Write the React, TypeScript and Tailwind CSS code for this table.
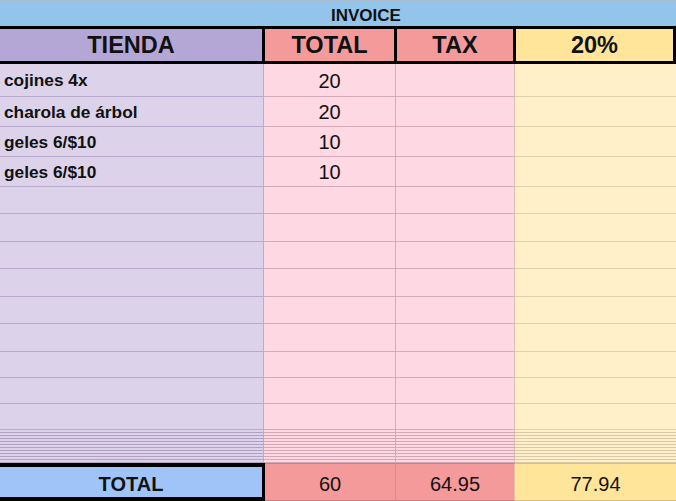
import React from "react";

const items = [
    { name: "cojines 4x", total: "20" },
    { name: "charola de árbol", total: "20" },
    { name: "geles 6/$10", total: "10" },
    { name: "geles 6/$10", total: "10" },
];

// row heights incl. the 1px bottom line
const rowHeights = [
    "h-[33px]", "h-[30px]", "h-[30px]", "h-[30px]",
    "h-[27px]", "h-[28px]", "h-[27px]", "h-[28px]", "h-[27px]",
    "h-[28px]", "h-[26px]", "h-[26px]", "h-[26px]",
];

function DataRow({ h, name, total }: { h: string; name?: string; total?: string }) {
    return (
        <div className={`flex w-full ${h}`}>
            <div className="w-[264px] flex items-center pl-[4px] pt-[2px] bg-[#dcd3ea] border-b border-r border-b-[#b8aacb] border-r-[#c2aac4] text-[17.3px] font-bold text-[#111]">
                {name}
            </div>
            <div className="w-[132px] flex items-center justify-center pt-[1px] bg-[#fed9e3] border-b border-r border-b-[#d7aabb] border-r-[#d7aabb] text-[20px] text-[#111]">
                {total}
            </div>
            <div className="w-[119px] bg-[#fed9e3] border-b border-r border-b-[#d7aabb] border-r-[#dcc0b0]"></div>
            <div className="flex-1 bg-[#fff0ca] border-b border-b-[#e2cfae]"></div>
        </div>
    );
}

function ThinRow() {
    return (
        <div className="flex w-full h-[3px]">
            <div className="w-[264px] bg-[#dcd3ea] border-b border-r border-b-[#b0a2c4] border-r-[#c2aac4]"></div>
            <div className="w-[132px] bg-[#fed9e3] border-b border-r border-b-[#d3a6b6] border-r-[#d7aabb]"></div>
            <div className="w-[119px] bg-[#fed9e3] border-b border-r border-b-[#d3a6b6] border-r-[#dcc0b0]"></div>
            <div className="flex-1 bg-[#fff0ca] border-b border-b-[#dcc8a6]"></div>
        </div>
    );
}

export default function App() {
    return (
        <section className="w-[676px] h-[501px] overflow-hidden bg-white font-['Liberation_Sans',Arial,sans-serif] text-[#111]">
            <div className="h-[26px] flex items-center pl-[331px] pt-[5px] bg-[#93c5ea] border-t border-t-[#a9bccb] text-[17px] font-bold">
                INVOICE
            </div>
            <div className="flex h-[38px] border-y-[3px] border-black text-[23.5px] font-bold">
                <div className="w-[265px] flex items-center justify-center pt-[2px] bg-[#b4a7d6] border-r-[3px] border-black">TIENDA</div>
                <div className="w-[132px] flex items-center justify-center pt-[2px] bg-[#f49a9b] border-r-[3px] border-black">TOTAL</div>
                <div className="w-[119px] flex items-center justify-center pt-[2px] bg-[#f49a9b] border-r-[3px] border-black">TAX</div>
                <div className="w-[160px] flex items-center justify-center pt-[2px] bg-[#ffe599] border-r-[3px] border-black">20%</div>
            </div>
            {rowHeights.map((h, i) => (
                <DataRow key={i} h={h} name={items[i]?.name} total={items[i]?.total} />
            ))}
            {Array.from({ length: 11 }).map((_, i) => (
                <ThinRow key={"t" + i} />
            ))}
            <div className="flex h-[38px] text-[20px]">
                <div className="w-[265px] flex items-center justify-center pt-[3px] bg-[#a0c4f8] border-y-4 border-r-[3px] border-black font-bold">TOTAL</div>
                <div className="w-[131px] flex items-center justify-center pt-[3px] bg-[#f49a9b] border-y border-r border-y-[#c88080] border-r-[#d98a8a]">60</div>
                <div className="w-[119px] flex items-center justify-center pt-[3px] bg-[#f49a9b] border-y border-r border-y-[#c88080] border-r-[#e8c0a0]">64.95</div>
                <div className="flex-1 flex items-center justify-center pt-[3px] bg-[#ffe599] border-y border-y-[#d8c080]">77.94</div>
            </div>
        </section>
    );
}
